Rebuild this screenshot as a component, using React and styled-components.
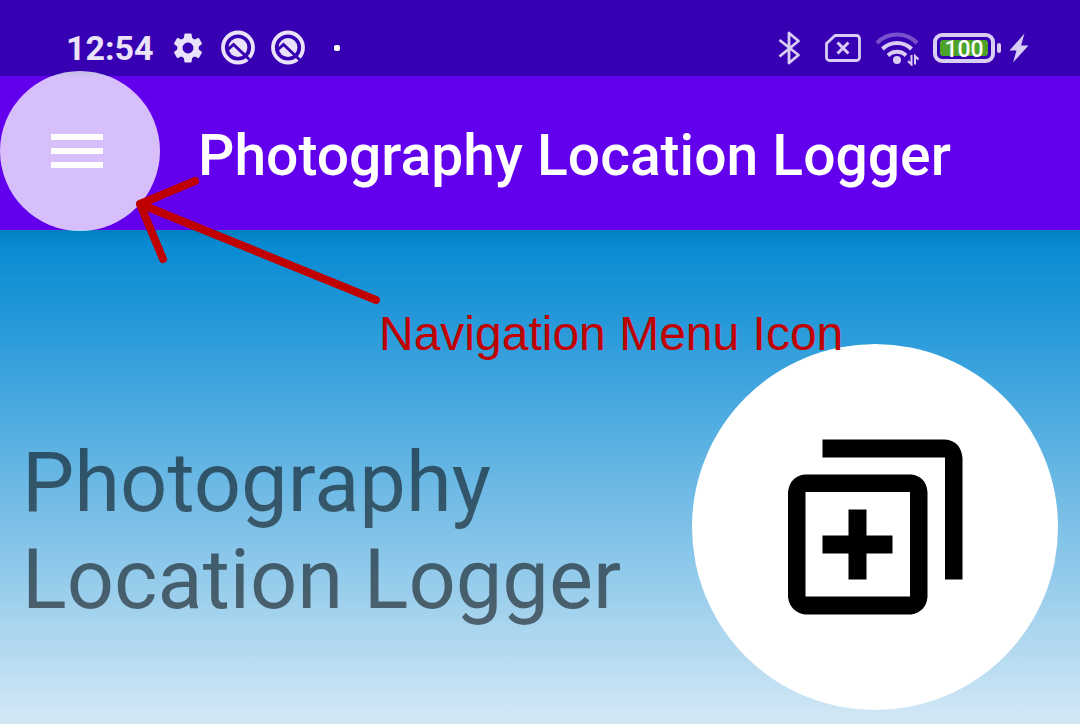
import React from "react";
import styled, { createGlobalStyle } from "styled-components";
import { MdSettings } from "react-icons/md";

const GlobalStyle = createGlobalStyle`
  *, *::before, *::after { box-sizing: border-box; }
  body { margin: 0; font-family: Roboto, "Liberation Sans", sans-serif; }
  h1, p { margin: 0; }
`;

const Screen = styled.div`
  position: relative;
  display: flex;
  flex-direction: column;
  min-height: 100vh;
  overflow: hidden;
`;

const StatusBar = styled.div`
  display: flex;
  align-items: center;
  justify-content: space-between;
  height: 76px;
  padding: 20px 51px 0 66px;
  background: #3700b3;
  color: #e9e2f8;
`;

const StatusGroup = styled.div`
  display: flex;
  align-items: center;
  gap: ${({ $gap }) => $gap}px;
`;

const Clock = styled.time`
  font-size: 34px;
  font-weight: 700;
  line-height: 40px;
`;

const StatusIcon = styled.svg`
  display: block;
  flex: none;
  width: ${({ $w }) => $w}px;
  height: 36px;
`;

const Dot = styled.span`
  width: 6px;
  height: 6px;
  margin-left: 14px;
  border-radius: 2px;
  background: #fff;
`;

const Battery = styled.div`
  display: flex;
  align-items: center;
  gap: 2px;

  &::after {
    content: "";
    width: 4px;
    height: 10px;
    border-radius: 2px;
    background: #d9cdf4;
  }
`;

const BatteryBody = styled.div`
  width: 62px;
  height: 30px;
  padding: 3px;
  border: 4px solid #d9cdf4;
  border-radius: 9px;
`;

const BatteryLevel = styled.div`
  display: flex;
  align-items: flex-start;
  justify-content: center;
  height: 16px;
  border-radius: 3px;
  background: #4ca32c;
  color: #fff;
  font-size: 23px;
  font-weight: 500;
  line-height: 19px;
`;

const Toolbar = styled.header`
  display: flex;
  align-items: center;
  gap: 38px;
  height: 154px;
  background: #6200ee;
  color: #fff;
`;

const MenuButton = styled.button`
  position: relative;
  z-index: 1;
  display: flex;
  flex: none;
  flex-direction: column;
  align-items: flex-start;
  justify-content: center;
  gap: 8px;
  width: 160px;
  height: 160px;
  margin: -5px 0 0;
  padding: 0 0 0 51px;
  border: 0;
  border-radius: 50%;
  background: rgba(255, 255, 255, 0.75);
  cursor: pointer;
`;

const MenuBar = styled.span`
  width: 52px;
  height: 6px;
  background: #fff;
`;

const Title = styled.h1`
  padding-top: 6px;
  font-size: 57px;
  font-weight: 500;
  line-height: 64px;
  white-space: nowrap;
`;

const Hero = styled.main`
  display: flex;
  flex: 1;
  align-items: flex-start;
  justify-content: space-between;
  padding: 114px 22px 14px 22px;
  background:
    linear-gradient(rgba(0, 0, 0, 0.08), rgba(0, 0, 0, 0) 14px),
    linear-gradient(#0288d1, #2d9cdb 22%, #d3e8f5);
`;

const HeroTitle = styled.p`
  flex: 1;
  padding-top: 90px;
  color: rgba(0, 0, 0, 0.54);
  font-size: 83px;
  line-height: 97px;
`;

const AddButton = styled.button`
  flex: none;
  width: 366px;
  height: 366px;
  padding: 0;
  border: 0;
  border-radius: 50%;
  background: #fff;
  cursor: pointer;

  svg {
    display: block;
    width: 366px;
    height: 366px;
  }
`;

const Arrow = styled.svg`
  position: absolute;
  z-index: 2;
  top: 170px;
  left: 130px;
  width: 260px;
  height: 140px;
  pointer-events: none;
`;

const Callout = styled.p`
  position: absolute;
  z-index: 2;
  top: 306px;
  left: 379px;
  color: #c00000;
  font-family: "Liberation Sans", Arial, sans-serif;
  font-size: 48px;
  line-height: 55px;
  white-space: nowrap;
`;

function AppBadge() {
  return (
    <StatusIcon $w={36} viewBox="0 0 36 36" fill="none" aria-hidden="true">
      <circle cx="18" cy="17.5" r="15" stroke="currentColor" strokeWidth="3.8" />
      <circle cx="18" cy="17.5" r="9.4" fill="currentColor" />
      <path d="M8 19.500L13.500 14.500L31 31" stroke="#3700b3" strokeWidth="3" />
    </StatusIcon>
  );
}

function BluetoothIcon() {
  return (
    <StatusIcon $w={24} viewBox="0 0 24 36" fill="none" stroke="#d9cdf4" strokeWidth="2.8" strokeLinejoin="round" aria-hidden="true">
      <path d="M2.500 10L21.500 25L12 33V3L21.500 11L2.500 26.500" />
    </StatusIcon>
  );
}

function NoSimIcon() {
  return (
    <StatusIcon $w={36} viewBox="0 0 36 36" fill="none" stroke="#d9cdf4" strokeLinejoin="round" aria-hidden="true">
      <path d="M10 5.500H31.500A3 3 0 0 1 34.500 8.500V27.500A3 3 0 0 1 31.500 30.500H4.500A3 3 0 0 1 1.500 27.500V13.500Z" strokeWidth="2.8" />
      <path d="M12.500 12.500L23.500 23.500M23.500 12.500L12.500 23.500" strokeWidth="3" />
    </StatusIcon>
  );
}

function WifiIcon() {
  return (
    <StatusIcon $w={44} viewBox="0 0 44 36" fill="none" stroke="#d9cdf4" strokeWidth="4" aria-hidden="true">
      <path d="M2 13A28 28 0 0 1 42 13" strokeOpacity="0.4" />
      <path d="M7.500 19A20.500 20.500 0 0 1 36.500 19" />
      <path d="M13 25.500A12.700 12.700 0 0 1 31 25.500" />
      <circle cx="22" cy="30" r="4" fill="#d9cdf4" stroke="none" />
      <path d="M36.500 25V34.500L33 31M40 34.500V26L43.500 29.500" strokeWidth="2" />
    </StatusIcon>
  );
}

function BoltIcon() {
  return (
    <StatusIcon $w={20} viewBox="0 0 20 36" fill="#d9cdf4" aria-hidden="true">
      <path d="M15.500 3.500L0.500 20.500H7.500L4 32.500L19.500 15.500H12Z" />
    </StatusIcon>
  );
}

function AddPhotoIcon() {
  return (
    <svg viewBox="0 0 366 366" aria-hidden="true">
      <path d="M130.500 95.500H253Q269 97 270.500 114V235.500H253V113.500H130.500Z" />
      <path
        fillRule="evenodd"
        d="M113 130.500H219Q234 132 235.500 148V253Q234 268 219 270.500H113Q98 268 96 253V148Q98 132 113 130.500ZM113.500 148V252.500H218V148Z"
      />
      <path d="M156.500 165.500H174.500V191.500H200.500V209.500H174.500V235.500H156.500V209.500H130.500V191.500H156.500Z" />
    </svg>
  );
}

export default function App() {
  return (
    <>
      <GlobalStyle />
      <Screen>
        <StatusBar>
          <StatusGroup $gap={16}>
            <Clock>12:54</Clock>
            <StatusGroup $gap={14}>
              <MdSettings size={36} aria-hidden="true" />
              <AppBadge />
              <AppBadge />
              <Dot />
            </StatusGroup>
          </StatusGroup>
          <StatusGroup $gap={24}>
            <BluetoothIcon />
            <StatusGroup $gap={14}>
              <NoSimIcon />
              <WifiIcon />
              <StatusGroup $gap={8}>
                <Battery>
                  <BatteryBody>
                    <BatteryLevel>100</BatteryLevel>
                  </BatteryBody>
                </Battery>
                <BoltIcon />
              </StatusGroup>
            </StatusGroup>
          </StatusGroup>
        </StatusBar>
        <Toolbar>
          <MenuButton type="button" aria-label="Open navigation menu">
            <MenuBar />
            <MenuBar />
            <MenuBar />
          </MenuButton>
          <Title>Photography Location Logger</Title>
        </Toolbar>
        <Hero>
          <HeroTitle>Photography Location Logger</HeroTitle>
          <AddButton type="button" aria-label="Add location">
            <AddPhotoIcon />
          </AddButton>
        </Hero>
        <Arrow
          viewBox="0 0 260 140"
          fill="none"
          stroke="#c00000"
          strokeWidth="8"
          strokeLinecap="round"
          strokeLinejoin="round"
          aria-hidden="true"
        >
          <path d="M246 130L10 34M65 11L10 34L33 89" />
        </Arrow>
        <Callout>Navigation Menu Icon</Callout>
      </Screen>
    </>
  );
}
